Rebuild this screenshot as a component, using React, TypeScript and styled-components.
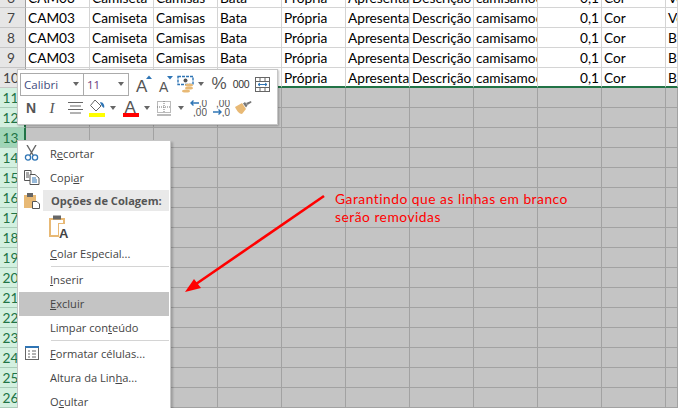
import React from 'react'
import styled, { createGlobalStyle } from 'styled-components'

const GlobalStyle = createGlobalStyle`
    html, body {
        margin: 0;
        width: 678px;
        height: 408px;
        overflow: hidden;
        background: #c4c4c4;
    }
`

const dataRows = [6, 7, 8, 9, 10]
const emptyRows = [11, 12, 13, 14, 15, 16, 17, 18, 19, 20, 21, 22, 23, 24, 25, 26]

const cells = (row: number) => [
    'CAM03', 'Camiseta', 'Camisas', 'Bata', 'Própria', 'Apresentação', 'Descrição', 'camisamodelo',
    '0,1', 'Cor', row < 8 ? 'Verde' : 'Branco',
]

export default function App() {
    return (
        <Page>
            <GlobalStyle />
            <Sheet>
                {dataRows.map((row) => (
                    <Row key={row}>
                        <RowHead>{row}</RowHead>
                        {cells(row).map((text, i) => (
                            <Cell key={i} $right={i === 8} $last={row === 10}>{text}</Cell>
                        ))}
                    </Row>
                ))}
                {emptyRows.map((row) => (
                    <Row key={row}>
                        <RowHead $selected $active={row === 13}>{row}</RowHead>
                        {Array.from({ length: 11 }).map((_, i) => (
                            <EmptyCell key={i} />
                        ))}
                    </Row>
                ))}
            </Sheet>

            <MiniBar>
                <BarRow>
                    <Combo $w={64}>Calibri<Caret /></Combo>
                    <Combo $w={46} $purple>11<Caret /></Combo>
                    <ToolBtn $w={20} $ml={7}><GrowIcon /></ToolBtn>
                    <ToolBtn $w={20} $ml={2}><ShrinkIcon /></ToolBtn>
                    <ToolBtn $w={18}><MoneyIcon /></ToolBtn>
                    <ToolBtn $w={12}><Caret /></ToolBtn>
                    <PercentBtn>%</PercentBtn>
                    <ThousandBtn>000</ThousandBtn>
                    <ToolBtn $w={22}><WrapIcon /></ToolBtn>
                </BarRow>
                <BarRow>
                    <BoldBtn>N</BoldBtn>
                    <ItalicBtn>I</ItalicBtn>
                    <ToolBtn $w={26}><AlignIcon /></ToolBtn>
                    <ToolBtn $w={18}><FillIcon /></ToolBtn>
                    <ToolBtn $w={14}><Caret /></ToolBtn>
                    <ToolBtn $w={22}><FontColorIcon /></ToolBtn>
                    <ToolBtn $w={10}><Caret /></ToolBtn>
                    <ToolBtn $w={24}><BorderIcon /></ToolBtn>
                    <ToolBtn $w={10}><Caret /></ToolBtn>
                    <ToolBtn $w={24}><DecimalIcon /></ToolBtn>
                    <ToolBtn $w={22}><DecimalIcon $less /></ToolBtn>
                    <ToolBtn $w={22}><BrushIcon /></ToolBtn>
                </BarRow>
            </MiniBar>

            <Menu>
                <MenuItem><Gutter><ScissorsIcon /></Gutter>R<Key>e</Key>cortar</MenuItem>
                <MenuItem><Gutter><CopyIcon /></Gutter>Copi<Key>a</Key>r</MenuItem>
                <PasteHeader><Gutter><PasteIcon /></Gutter><PasteTitle>Opções de Colagem:</PasteTitle></PasteHeader>
                <PasteOptions><PasteTextIcon /></PasteOptions>
                <MenuItem><Gutter /><Key>C</Key>olar Especial...</MenuItem>
                <Separator />
                <MenuItem><Gutter /><Key>I</Key>nserir</MenuItem>
                <MenuItem $hover><Gutter /><Key>E</Key>xcluir</MenuItem>
                <MenuItem><Gutter />Limpar con<Key>t</Key>eúdo</MenuItem>
                <Separator />
                <MenuItem><Gutter><FormatIcon /></Gutter><Key>F</Key>ormatar células...</MenuItem>
                <MenuItem><Gutter />Altura da Lin<Key>h</Key>a...</MenuItem>
                <MenuItem><Gutter />O<Key>c</Key>ultar</MenuItem>
            </Menu>

            <Arrow width="678" height="408" viewBox="0 0 678 408">
                <path d="M324 196 L196 284" stroke="#f00" strokeWidth="2.6" fill="none" />
                <path d="M185 292 L194 279 L201 288 Z" fill="#f00" />
            </Arrow>
            <Note>Garantindo que as linhas em branco<br />serão removidas</Note>
        </Page>
    )
}

function Caret() {
    return <CaretShape />
}

function GrowIcon() {
    return (
        <svg width="20" height="20" viewBox="0 0 20 20">
            <text x="1" y="18" fontFamily="Liberation Sans" fontSize="17" fill="#555">A</text>
            <path d="M11 5 L14 1.5 L17 5 Z" fill="#2f75b5" />
        </svg>
    )
}

function ShrinkIcon() {
    return (
        <svg width="20" height="20" viewBox="0 0 20 20">
            <text x="2" y="18" fontFamily="Liberation Sans" fontSize="14" fill="#555">A</text>
            <path d="M10 2 L16 2 L13 5.5 Z" fill="#2f75b5" />
        </svg>
    )
}

function MoneyIcon() {
    return (
        <svg width="18" height="18" viewBox="0 0 18 18">
            <rect x="1" y="1.5" width="15" height="8" fill="#fff" stroke="#2f75b5" strokeWidth="1.4" strokeDasharray="3 1" />
            <circle cx="8.5" cy="5.5" r="2" fill="#555" />
            <ellipse cx="12" cy="10" rx="4" ry="1.6" fill="#e8b975" />
            <ellipse cx="12" cy="13" rx="4" ry="1.6" fill="#e8b975" />
            <ellipse cx="9" cy="16" rx="4" ry="1.6" fill="#e8b975" />
        </svg>
    )
}

function WrapIcon() {
    return (
        <svg width="15" height="15" viewBox="0 0 15 15" fill="none" stroke="#666">
            <rect x="0.5" y="0.5" width="14" height="14" />
            <path d="M0 4.5H15M0 10.5H15M5 0V4M10 0V4M5 11V15M10 11V15" />
            <path d="M3 7.5H12" stroke="#2f75b5" />
            <path d="M3 7.5L5 6M3 7.5L5 9M12 7.5L10 6M12 7.5L10 9" stroke="#2f75b5" />
        </svg>
    )
}

function AlignIcon() {
    return (
        <svg width="15" height="12" viewBox="0 0 15 12" stroke="#666" fill="none">
            <path d="M0 0.5H15M2 4H13M0 7.5H15M2 11H13" />
        </svg>
    )
}

function FillIcon() {
    return (
        <svg width="16" height="18" viewBox="0 0 16 18">
            <path d="M6 1 L12 7 L7 12 L1.5 6.5 Z" fill="#fff" stroke="#666" />
            <path d="M11 3 C14 3 16 6 15 9 C13 8 12 6 11 3Z" fill="#2f75b5" />
            <rect x="0" y="14" width="16" height="4" fill="#ffff00" />
        </svg>
    )
}

function FontColorIcon() {
    return (
        <svg width="16" height="18" viewBox="0 0 16 18">
            <text x="1.5" y="13.5" fontFamily="Liberation Sans" fontSize="17" fill="#555">A</text>
            <rect x="0" y="14" width="16" height="4" fill="#f00" />
        </svg>
    )
}

function BorderIcon() {
    return (
        <svg width="14" height="15" viewBox="0 0 14 15" fill="none" stroke="#777">
            <path d="M0.5 0.5H13.5V11.5H0.5Z M7 0V11 M0 6H14" strokeDasharray="1 1" />
            <path d="M0 14H14" />
        </svg>
    )
}

function DecimalIcon({ $less }: { $less?: boolean }) {
    return (
        <svg width="17" height="17" viewBox="0 0 17 17" fontFamily="Liberation Sans" fontSize="10" fill="#555" textAnchor="end">
            <text x="17" y="7">{$less ? ',00' : ',0'}</text>
            <text x="17" y="16">{$less ? ',0' : ',00'}</text>
            <path d={$less ? 'M0 12H8M5.5 9.5L8 12L5.5 14.5' : 'M9 3H1M3.5 0.5L1 3L3.5 5.5'} stroke="#2f75b5" strokeWidth="1.4" fill="none" />
        </svg>
    )
}

function BrushIcon() {
    return (
        <svg width="17" height="14" viewBox="0 0 17 14">
            <path d="M0 6 L7 2 L11 8 L7 13 C4 13 2 10 0 6Z" fill="#e8b975" />
            <path d="M8 2.5 L10 1 L12.5 4.5 L11 6.5 Z" fill="#777" />
            <path d="M11 2 L16 0 L16.5 1.5 L12.5 4 Z" fill="#777" />
        </svg>
    )
}

function ScissorsIcon() {
    return (
        <svg width="15" height="16" viewBox="0 0 15 16" fill="none">
            <path d="M3 0 L9 10M12 0 L6 10" stroke="#666" strokeWidth="1.4" />
            <circle cx="4" cy="12.5" r="2.6" stroke="#2f75b5" strokeWidth="1.3" />
            <circle cx="11" cy="12.5" r="2.6" stroke="#2f75b5" strokeWidth="1.3" />
        </svg>
    )
}

function CopyIcon() {
    return (
        <svg width="16" height="15" viewBox="0 0 16 15" fill="#fff" stroke="#555">
            <path d="M0.5 0.5H7V10.5H0.5Z" />
            <path d="M2 3H5M2 5H5M2 7H5" />
            <path d="M6 4.5H11L15 8V14.5H6Z" />
            <path d="M8 8H12M8 10H13M8 12H13" stroke="#2f75b5" />
        </svg>
    )
}

function PasteIcon() {
    return (
        <svg width="16" height="16" viewBox="0 0 16 16">
            <path d="M0 2H12V15H0Z" fill="#e8b975" />
            <rect x="3" y="0" width="6" height="4" fill="#666" />
            <path d="M8.5 8.5H13L15.5 11V15.5H8.5Z" fill="#fff" stroke="#555" />
        </svg>
    )
}

function PasteTextIcon() {
    return (
        <svg width="22" height="23" viewBox="0 0 22 23">
            <path d="M1 3H17V9H11V22H1Z" fill="#e8b975" />
            <path d="M3 5H15V8H10V20H3Z" fill="#fff" />
            <rect x="5" y="0.5" width="8" height="4" fill="#666" />
            <text x="11" y="22.5" fontFamily="Liberation Sans" fontWeight="700" fontSize="13" fill="#444">A</text>
        </svg>
    )
}

function FormatIcon() {
    return (
        <svg width="14" height="14" viewBox="0 0 14 14" fill="none">
            <rect x="0.5" y="1" width="13" height="12.5" stroke="#666" />
            <rect x="0" y="0" width="14" height="2" fill="#2f75b5" />
            <path d="M3 5H5M7 5H11M3 8H5M7 8H11M3 11H5M7 11H11" stroke="#666" />
        </svg>
    )
}

const Page = styled.div`
    position: relative;
    width: 678px;
    height: 408px;
    overflow: hidden;
`

const Sheet = styled.div`
    margin-top: -12px;
`

const Row = styled.div`
    display: grid;
    grid-template-columns: 26px repeat(10, 64px) 12px;
    height: 20px;
    font-family: 'Lato', 'Liberation Sans', sans-serif;
    font-size: 13.7px;
    color: #000;
`

const RowHead = styled.div<{ $selected?: boolean; $active?: boolean }>`
    display: flex;
    align-items: center;
    justify-content: center;
    padding-right: 3px;
    box-sizing: border-box;
    background: ${(p) => (p.$active ? '#9fd5b7' : p.$selected ? '#d3f0e0' : '#e6e6e6')};
    border-right: ${(p) => (p.$selected ? '2px solid #217346' : '1px solid #9f9f9f')};
    border-bottom: 1px solid ${(p) => (p.$selected ? '#a9cdb9' : '#c6c6c6')};
    color: ${(p) => (p.$selected ? '#217346' : '#444')};
`

const Cell = styled.div<{ $right?: boolean; $last?: boolean }>`
    box-sizing: border-box;
    overflow: hidden;
    white-space: nowrap;
    padding: 0 2px;
    line-height: 20px;
    text-align: ${(p) => (p.$right ? 'right' : 'left')};
    background: #fff;
    border-right: 1px solid #d4d4d4;
    border-bottom: ${(p) => (p.$last ? '2px solid #217346' : '1px solid #d4d4d4')};
`

const EmptyCell = styled.div`
    box-sizing: border-box;
    background: #c4c4c4;
    border-right: 1px solid #a2a2a2;
    border-bottom: 1px solid #a2a2a2;
`

const MiniBar = styled.div`
    position: absolute;
    left: 17px;
    top: 69px;
    width: 261px;
    height: 56px;
    box-sizing: border-box;
    padding: 2px 0 0 2px;
    background: #fff;
    border: 1px solid #c6c6c6;
    box-shadow: 1px 1px 2px rgba(0, 0, 0, 0.25);
    display: flex;
    flex-direction: column;
`

const BarRow = styled.div`
    display: flex;
    align-items: center;
    height: 24px;
`

const Combo = styled.div<{ $w: number; $purple?: boolean }>`
    width: ${(p) => p.$w}px;
    height: 23px;
    flex: none;
    box-sizing: border-box;
    border: 1px solid #ababab;
    margin-right: -1px;
    padding: 0 4px 0 3px;
    display: flex;
    align-items: center;
    justify-content: space-between;
    font-family: 'Open Sans', sans-serif;
    font-size: 11.5px;
    color: ${(p) => (p.$purple ? '#6b3a7d' : '#3f4d7d')};
`

const CaretShape = styled.span`
    width: 0;
    height: 0;
    border-left: 3.5px solid transparent;
    border-right: 3.5px solid transparent;
    border-top: 4px solid #666;
`

const ToolBtn = styled.div<{ $w: number; $ml?: number }>`
    width: ${(p) => p.$w}px;
    height: 24px;
    margin-left: ${(p) => p.$ml ?? 0}px;
    flex: none;
    display: flex;
    align-items: center;
    justify-content: center;
`

const PercentBtn = styled.div`
    width: 24px;
    flex: none;
    text-align: center;
    font-family: 'Liberation Sans', sans-serif;
    font-size: 17px;
    color: #555;
`

const ThousandBtn = styled.div`
    width: 20px;
    flex: none;
    text-align: center;
    font-family: 'Liberation Sans', sans-serif;
    font-size: 10.5px;
    letter-spacing: -0.3px;
    color: #333;
`

const BoldBtn = styled.div`
    width: 22px;
    flex: none;
    text-align: center;
    font-family: 'Liberation Sans', sans-serif;
    font-size: 14px;
    font-weight: 700;
    color: #555;
`

const ItalicBtn = styled.div`
    width: 20px;
    flex: none;
    text-align: center;
    font-family: 'Liberation Serif', serif;
    font-size: 15px;
    font-style: italic;
    color: #555;
`

const Menu = styled.div`
    position: absolute;
    left: 17px;
    top: 140px;
    width: 154px;
    height: 280px;
    box-sizing: border-box;
    padding: 1px;
    background: #fff;
    border: 1px solid #c6c6c6;
    box-shadow: 2px 2px 2px rgba(0, 0, 0, 0.2);
    font-family: 'Open Sans', sans-serif;
    font-size: 11.1px;
    color: #444;
`

const MenuItem = styled.div<{ $hover?: boolean }>`
    display: flex;
    align-items: center;
    height: 24px;
    box-sizing: border-box;
    padding-bottom: 2px;
    white-space: pre;
    background: ${(p) => (p.$hover ? '#c4c4c4' : 'transparent')};
`

const Gutter = styled.span`
    width: 31px;
    flex: none;
    display: flex;
    justify-content: center;
    align-items: center;
    padding-right: 6px;
    box-sizing: border-box;
`

const Key = styled.span`
    text-decoration: underline;
    text-underline-offset: 1px;
`

const PasteHeader = styled.div`
    display: flex;
    height: 21px;
    align-items: center;
`

const PasteTitle = styled.div`
    flex: 1;
    align-self: stretch;
    display: flex;
    align-items: center;
    padding: 0 0 1px 8px;
    margin-left: -7px;
    background: #e9e9e9;
    font-weight: 700;
    color: #555;
`

const PasteOptions = styled.div`
    height: 31px;
    padding: 4px 0 0 29px;
    box-sizing: border-box;
`

const Separator = styled.div`
    height: 1px;
    margin: 0 0 1px 32px;
    background: #d4d4d4;
`

const Arrow = styled.svg`
    position: absolute;
    left: 0;
    top: 0;
    pointer-events: none;
`

const Note = styled.div`
    position: absolute;
    left: 335px;
    top: 190px;
    font-family: 'Lato', 'Liberation Sans', sans-serif;
    font-size: 13.8px;
    letter-spacing: 0.5px;
    line-height: 18px;
    color: #f00;
    white-space: nowrap;
`
